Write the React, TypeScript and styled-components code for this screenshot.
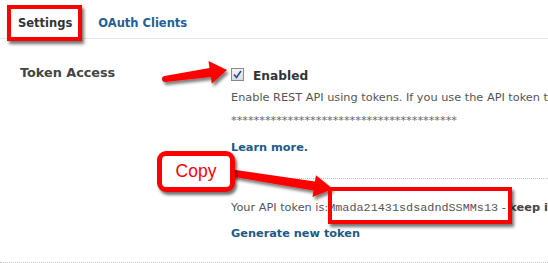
import React from 'react';
import styled, { createGlobalStyle } from 'styled-components';

const GlobalStyle = createGlobalStyle`
  html, body {
    margin: 0;
    padding: 0;
    background: #fff;
  }
  body {
    font-family: "DejaVu Sans", Verdana, sans-serif;
  }
`;

const Page = styled.div`
  position: relative;
  width: 548px;
  height: 263px;
  overflow: hidden;
  background: #fff;
`;

const TabBar = styled.div`
  display: flex;
  padding-left: 5px;
  border-bottom: 1px solid #e6e6e6;
`;

const Tab = styled.div<{ $active?: boolean }>`
  padding: 8px 13px 0;
  line-height: 30px;
  font-size: 11.5px;
  font-weight: bold;
  color: ${p => (p.$active ? '#333' : '#1f6196')};
  white-space: nowrap;
`;

const Field = styled.div`
  display: grid;
  grid-template-columns: 211px 1fr;
  padding: 24px 0 19px 20px;
  border-bottom: 1px dotted #c4c4c4;
`;

const FieldLabel = styled.div`
  font-size: 12.8px;
  line-height: 20px;
  font-weight: bold;
  color: #444;
`;

const FieldBody = styled.div`
  display: flex;
  flex-direction: column;
  white-space: nowrap;
  overflow: hidden;
`;

const Line = styled.div<{ $mt: number; $lh?: number }>`
  margin-top: ${p => p.$mt}px;
  line-height: ${p => p.$lh ?? 18}px;
  font-size: 11.3px;
  color: #555;
`;

const CheckRow = styled.label`
  display: flex;
  align-items: flex-start;
  gap: 9px;
  margin-top: 3px;
  line-height: 20px;
  font-size: 12.2px;
  font-weight: bold;
  color: #333;
`;

const CheckBox = styled.span`
  box-sizing: border-box;
  width: 13px;
  height: 13px;
  margin-top: 2px;
  border: 1px solid #8a8a8a;
  background: linear-gradient(#f4f4f4, #dcdcdc);
  display: flex;
  align-items: center;
  justify-content: center;
`;

const Stars = styled(Line)`
  color: #666;
`;

const Link = styled.a`
  color: #1b5a8a;
  font-weight: bold;
  text-decoration: none;
`;

const Separator = styled.div`
  margin-top: 21px;
  border-top: 1px dotted #c4c4c4;
`;

const Token = styled.span`
  font-family: "Liberation Mono", "Courier New", monospace;
  font-size: 11.8px;
  color: #555;
`;

const Strong = styled.b`
  color: #444;
`;

const Overlay = styled.svg`
  position: absolute;
  left: 0;
  top: 0;
  pointer-events: none;
`;

const RedBox = styled.div<{ $x: number; $y: number; $w: number; $h: number }>`
  position: absolute;
  left: ${p => p.$x}px;
  top: ${p => p.$y}px;
  width: ${p => p.$w}px;
  height: ${p => p.$h}px;
  box-sizing: border-box;
  border: 4px solid #ff0000;
  box-shadow: 2px 3px 3px rgba(0, 0, 0, 0.55);
`;

const Callout = styled.div`
  position: absolute;
  left: 157px;
  top: 151px;
  width: 78px;
  height: 41px;
  box-sizing: border-box;
  border: 5px solid #ff0000;
  border-radius: 9px;
  background: #fff;
  box-shadow: 2px 3px 3px rgba(0, 0, 0, 0.55);
  display: flex;
  align-items: center;
  justify-content: center;
  font-family: "Liberation Sans", Arial, sans-serif;
  font-size: 17.5px;
  color: #ff0000;
`;

// polygon for a tapered arrow from (x1,y1) to tip (x2,y2)
function arrow(x1: number, y1: number, x2: number, y2: number, w0: number, w1: number, hl: number, hw: number) {
  const len = Math.hypot(x2 - x1, y2 - y1);
  const dx = (x2 - x1) / len;
  const dy = (y2 - y1) / len;
  const nx = -dy;
  const ny = dx;
  const bx = x2 - dx * hl;
  const by = y2 - dy * hl;
  const pts = [
    [x1 + nx * w0 / 2, y1 + ny * w0 / 2],
    [bx + nx * w1 / 2, by + ny * w1 / 2],
    [bx + nx * hw / 2, by + ny * hw / 2],
    [x2, y2],
    [bx - nx * hw / 2, by - ny * hw / 2],
    [bx - nx * w1 / 2, by - ny * w1 / 2],
    [x1 - nx * w0 / 2, y1 - ny * w0 / 2],
  ];
  return pts.map(p => p.map(v => v.toFixed(1)).join(',')).join(' ');
}

export default function App() {
  return (
    <Page>
      <GlobalStyle />
      <TabBar>
        <Tab $active>Settings</Tab>
        <Tab>OAuth Clients</Tab>
      </TabBar>

      <Field>
        <FieldLabel>Token Access</FieldLabel>
        <FieldBody>
          <CheckRow>
            <CheckBox>
              <svg width="9" height="9" viewBox="0 0 9 9">
                <path d="M1 4.5 L3.5 7.5 L8 1" fill="none" stroke="#2b47a6" strokeWidth="1.6" />
              </svg>
            </CheckBox>
            Enabled
          </CheckRow>
          <Line $mt={3}>Enable REST API using tokens. If you use the API token to authenticate</Line>
          <Stars $mt={5}>{'*'.repeat(40)}</Stars>
          <Line $mt={9}>
            <Link href="#">Learn more.</Link>
          </Line>
          <Separator />
          <Line $mt={20}>
            Your API token is:<Token>Mmada21431sdsadndSSMMs13</Token> - <Strong>keep it secret</Strong>
          </Line>
          <Line $mt={8}>
            <Link href="#">Generate new token</Link>
          </Line>
        </FieldBody>
      </Field>

      <Overlay width="548" height="263">
        <defs>
          <filter id="shadow" x="-20%" y="-50%" width="140%" height="200%">
            <feDropShadow dx="2" dy="3" stdDeviation="1.5" floodColor="#000" floodOpacity="0.5" />
          </filter>
        </defs>
        <g fill="#ff0000" filter="url(#shadow)">
          <circle cx="165" cy="79" r="3" />
          <polygon points={arrow(165, 79, 227, 70, 6, 9, 17, 23)} />
          <polygon points={arrow(232, 173, 333, 189, 7, 9, 19, 22)} />
        </g>
      </Overlay>

      <RedBox $x={7} $y={5} $w={75} $h={36} />
      <RedBox $x={328} $y={187} $w={184} $h={37} />
      <Callout>Copy</Callout>
    </Page>
  );
}
